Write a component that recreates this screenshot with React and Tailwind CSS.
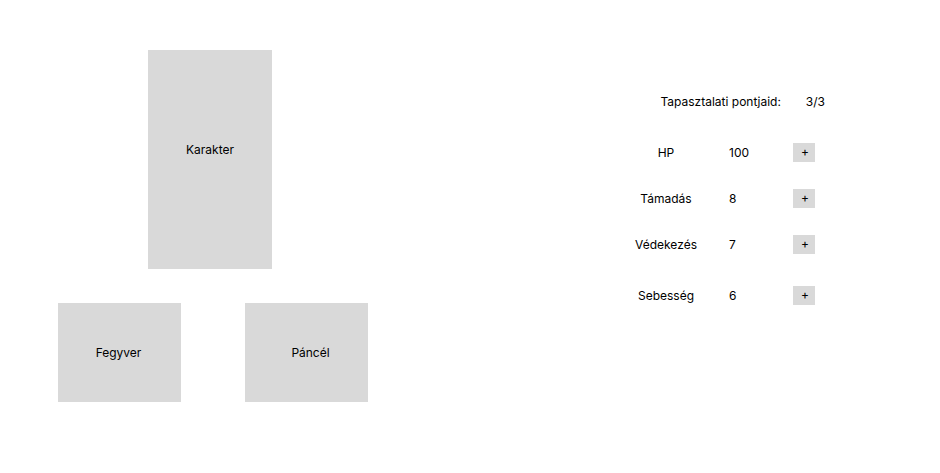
const stats = [
  { id: "hp", name: "HP", value: 100 },
  { id: "tamadas", name: "Támadás", value: 8 },
  { id: "vedekezes", name: "Védekezés", value: 7 },
  { id: "sebesseg", name: "Sebesség", value: 6 },
];

const slot =
  "flex items-center justify-center bg-[#d9d9d9] text-xs leading-4 text-black";

function Equipment() {
  return (
    <section className="flex w-[310px] flex-col gap-[34px]">
      <button type="button" className={`${slot} ml-[90px] h-[219px] w-[124px] pb-5`}>
        Karakter
      </button>
      <div className="flex w-full justify-between">
        <button type="button" className={`${slot} h-[99px] w-[123px] pr-0.5`}>
          Fegyver
        </button>
        <button type="button" className={`${slot} h-[99px] w-[123px] pl-2`}>
          Páncél
        </button>
      </div>
    </section>
  );
}

function StatRow({ stat }) {
  return (
    <li className="flex items-center last:mt-[5px]">
      <span id={stat.id} className="w-[62px] text-center">
        {stat.name}
      </span>
      <output aria-labelledby={stat.id} className="ml-8 w-16">
        {stat.value}
      </output>
      <button
        type="button"
        aria-label={`${stat.name} +`}
        className="flex h-[19px] w-[22px] items-center justify-center bg-[#d9d9d9] pb-0.5 pl-0.5"
      >
        +
      </button>
    </li>
  );
}

export default function App() {
  return (
    <main className="flex min-h-screen items-start justify-between bg-white pt-[50px] pr-[115px] pl-[58px] font-['Inter',sans-serif] text-xs leading-4 text-black">
      <Equipment />
      <section className="pt-11">
        <p className="flex justify-end gap-[25px]">
          <span>Tapasztalati pontjaid:</span>
          <span>3/3</span>
        </p>
        <ul className="mt-[33px] flex flex-col gap-[27px] pr-[10px]">
          {stats.map((stat) => (
            <StatRow key={stat.id} stat={stat} />
          ))}
        </ul>
      </section>
    </main>
  );
}
